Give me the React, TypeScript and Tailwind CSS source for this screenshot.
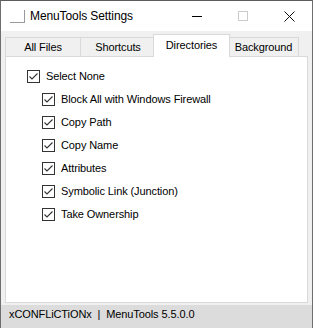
import { useState } from 'react';

const items = [
  'Block All with Windows Firewall',
  'Copy Path',
  'Copy Name',
  'Attributes',
  'Symbolic Link (Junction)',
  'Take Ownership',
];

const tabs = ['All Files', 'Shortcuts', 'Directories', 'Background'];

function CheckBox({ checked, onClick }: { checked: boolean; onClick: () => void }) {
  return (
    <span
      onClick={onClick}
      className="flex h-[13px] w-[13px] shrink-0 items-center justify-center border border-[#333333] bg-white"
    >
      {checked ? (
        <svg width="11" height="11" viewBox="0 0 11 11" fill="none">
          <path d="M1.5 5.5 L4 8 L9.5 2.5" stroke="#333333" strokeWidth="1.1" />
        </svg>
      ) : null}
    </span>
  );
}

export default function App() {
  const [checked, setChecked] = useState<boolean[]>(items.map(() => true));
  const allChecked = checked.every(Boolean);

  return (
    <div
      className="flex h-[328px] w-[313px] flex-col border-x border-t border-x-[#6e6e6e] border-t-[#5c5c5c] bg-[#f0f0f0] text-[11px] tracking-[-0.1px] text-black"
      style={{ fontFamily: '"Liberation Sans", Arial, sans-serif' }}
    >
      {/* title bar */}
      <div className="flex h-[30px] shrink-0 items-center bg-white">
        <div className="ml-[9px] h-[13px] w-[15px] border-b border-r border-[#9a9a9a]" />
        <span className="ml-[5px] text-[12px] tracking-[-0.1px]">MenuTools Settings</span>
        <div className="ml-auto flex h-full items-center">
          <div className="flex h-full w-[46px] items-center justify-center">
            <div className="h-px w-[10px] bg-black" />
          </div>
          <div className="flex h-full w-[46px] items-center justify-center">
            <div className="h-[10px] w-[10px] border border-[#cccccc]" />
          </div>
          <div className="flex h-full w-[46px] items-center justify-center">
            <svg width="11" height="11" viewBox="0 0 11 11">
              <path d="M0.5 0.5 L10.5 10.5 M10.5 0.5 L0.5 10.5" stroke="#111" strokeWidth="1" />
            </svg>
          </div>
        </div>
      </div>

      {/* tabs */}
      <div className="flex h-[25px] shrink-0 items-end pl-[4px] pt-[2px]">
        {tabs.map((t) =>
          t === 'Directories' ? (
            <div
              key={t}
              className="relative z-10 -mx-[2px] -mb-px flex h-[23px] w-[77px] items-start justify-center border-x border-t border-[#d9d9d9] bg-white pt-[2px]"
            >
              {t}
            </div>
          ) : (
            <div
              key={t}
              className={`flex h-[19px] items-center justify-center border-l border-t border-[#d9d9d9] bg-[#f0f0f0] last:border-r ${
                t === 'Background' ? 'w-[71px]' : 'w-[75px]'
              }`}
            >
              {t}
            </div>
          ),
        )}
      </div>

      {/* panel */}
      <div className="mx-[4px] h-[247px] shrink-0 border border-[#d9d9d9] bg-white pl-[21px] pt-[13px]">
        <div className="flex h-[23px] items-start gap-[6px]">
          <CheckBox checked={allChecked} onClick={() => setChecked(items.map(() => !allChecked))} />
          <span className="leading-[13px]">Select None</span>
        </div>
        {items.map((label, i) => (
          <div key={label} className="flex h-[23px] items-start gap-[6px] pl-[15px]">
            <CheckBox
              checked={checked[i]}
              onClick={() => setChecked(checked.map((c, j) => (j === i ? !c : c)))}
            />
            <span className="leading-[13px]">{label}</span>
          </div>
        ))}
      </div>

      {/* status strip */}
      <div className="mt-[2px] flex-1 bg-[#dcdcdc] pl-[8px] pt-[1px]">
        <span className="whitespace-pre">xCONFLiCTiONx  |  MenuTools 5.5.0.0</span>
      </div>
    </div>
  );
}
